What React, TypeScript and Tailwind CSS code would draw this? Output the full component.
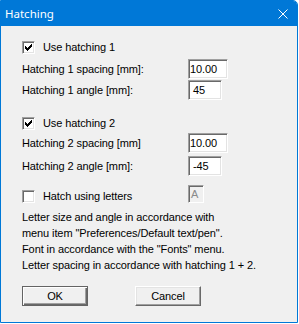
const CHECK: [number, number][] = [
  [6, 0],
  [5, 1], [6, 1],
  [0, 2], [4, 2], [5, 2], [6, 2],
  [0, 3], [1, 3], [3, 3], [4, 3], [5, 3],
  [0, 4], [1, 4], [2, 4], [3, 4], [4, 4],
  [1, 5], [2, 5], [3, 5],
  [2, 6],
];

function Checkbox({ checked }: { checked: boolean }) {
  return (
    <div className="w-[13px] h-[13px] shrink-0 bg-white border border-t-[#a0a0a0] border-l-[#a0a0a0] border-r-white border-b-white shadow-[inset_1px_1px_0_#696969,inset_-1px_-1px_0_#e3e3e3] relative">
      {checked && (
        <svg width="7" height="7" viewBox="0 0 7 7" className="absolute left-[2px] top-[2px]" shapeRendering="crispEdges">
          {CHECK.map(([x, y]) => (
            <rect key={`${x}-${y}`} x={x} y={y} width="1" height="1" fill="#000" />
          ))}
        </svg>
      )}
    </div>
  );
}

function Field({ value, wide, pad }: { value: string; wide: boolean; pad: string }) {
  return (
    <div
      className={`${wide ? "w-[40px]" : "w-[34px]"} ${pad} h-[20px] bg-white border border-t-[#a0a0a0] border-l-[#a0a0a0] border-r-white border-b-white shadow-[inset_1px_1px_0_#696969,inset_-1px_-1px_0_#e3e3e3] flex items-center text-black`}
    >
      {value}
    </div>
  );
}

function LabelRow({ label, value, wide, pad }: { label: string; value: string; wide: boolean; pad: string }) {
  return (
    <div className="flex items-center h-[20px]">
      <div className="w-[166px]">{label}</div>
      <Field value={value} wide={wide} pad={pad} />
    </div>
  );
}

export default function App() {
  return (
    <div className="w-[299px] h-[324px] bg-white">
      <div className="w-[298px] h-[323px] border border-[#0078d7] rounded-tr-[5px] bg-[#f0f0f0] flex flex-col overflow-hidden">
        <div className="h-[25px] shrink-0 bg-[#0078d7] flex items-center justify-between pl-[4px] pr-[9px]">
          <span className="text-white text-[11.5px] leading-none" style={{ fontFamily: '"Noto Sans", "Open Sans", sans-serif' }}>
            Hatching
          </span>
          <svg width="10" height="10" viewBox="0 0 10 10" className="mt-[1px]">
            <path d="M0.5 0.5 L9.5 9.5 M9.5 0.5 L0.5 9.5" stroke="#fff" strokeWidth="1" />
          </svg>
        </div>
        <div
          className="flex flex-col pl-[21px] text-[11px] tracking-[-0.1px] text-black"
          style={{ fontFamily: '"Liberation Sans", Arial, sans-serif' }}
        >
          <div className="flex items-center h-[13px] mt-[15px] gap-[8px]">
            <Checkbox checked={true} />
            <span>Use hatching 1</span>
          </div>
          <div className="mt-[5px]">
            <LabelRow label="Hatching 1 spacing [mm]:" value="10.00" wide={true} pad="pl-[1px]" />
          </div>
          <div className="mt-[1px]">
            <LabelRow label="Hatching 1 angle [mm]:" value="45" wide={false} pad="pl-[4px]" />
          </div>
          <div className="flex items-center h-[13px] mt-[17px] gap-[8px]">
            <Checkbox checked={true} />
            <span>Use hatching 2</span>
          </div>
          <div className="mt-[3px]">
            <LabelRow label="Hatching 2 spacing [mm]" value="10.00" wide={true} pad="pl-[1px]" />
          </div>
          <div className="mt-[3px]">
            <LabelRow label="Hatching 2 angle [mm]:" value="-45" wide={false} pad="pl-[4px]" />
          </div>
          <div className="flex h-[18px] mt-[9px]">
            <div className="w-[166px] flex items-center gap-[8px] self-end h-[13px]">
              <Checkbox checked={false} />
              <span>Hatch using letters</span>
            </div>
            <div className="w-[16px] h-[18px] bg-[#f0f0f0] border border-t-[#a0a0a0] border-l-[#a0a0a0] border-r-white border-b-white shadow-[inset_1px_1px_0_#696969] flex items-center pl-[2px] text-[#8a8a8a]">
              A
            </div>
          </div>
          <div className="mt-[6px] leading-[16px]">
            <div>Letter size and angle in accordance with</div>
            <div>menu item "Preferences/Default text/pen".</div>
            <div>Font in accordance with the "Fonts" menu.</div>
            <div>Letter spacing in accordance with hatching 1 + 2.</div>
          </div>
          <div className="flex mt-[13px] gap-[47px]">
            <div className="w-[66px] h-[20px] bg-[#f0f0f0] border border-[#646464] shadow-[inset_1px_1px_0_#ffffff,inset_-1px_-1px_0_#696969,inset_-2px_-2px_0_#a0a0a0] flex items-center justify-center">
              OK
            </div>
            <div className="w-[66px] h-[20px] bg-[#f0f0f0] border border-t-white border-l-white border-r-[#696969] border-b-[#696969] shadow-[inset_-1px_-1px_0_#a0a0a0,inset_1px_1px_0_#e3e3e3] flex items-center justify-center">
              Cancel
            </div>
          </div>
        </div>
      </div>
    </div>
  );
}
